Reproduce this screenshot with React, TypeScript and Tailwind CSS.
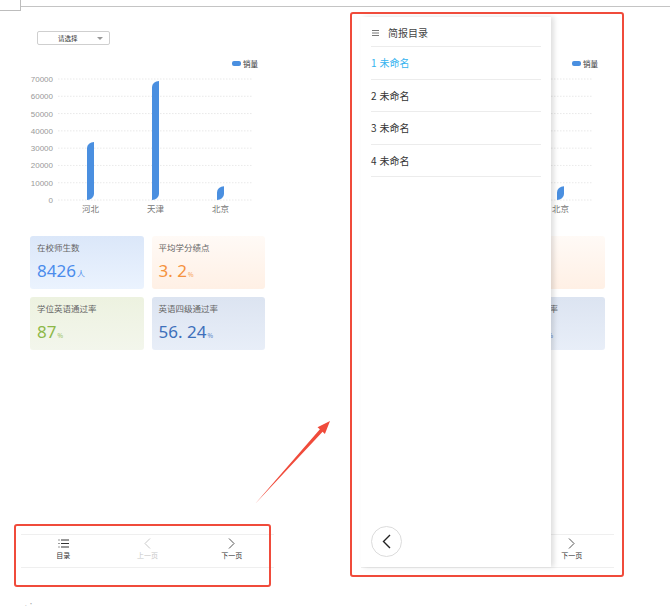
import React from 'react';

const bars = [
  { name: '河北', value: 33500, x: 66 },
  { name: '天津', value: 68800, x: 131 },
  { name: '北京', value: 8000, x: 196 },
];

const cards = [
  { title: '在校师生数', value: '8426', unit: '人', bg: 'bg-linear-to-b from-[#dbe7f9] to-[#ebf3fe]', color: 'text-[#4b8cec]' },
  { title: '平均学分绩点', value: '3. 2', unit: '%', bg: 'bg-linear-to-b from-[#fffaf6] to-[#fff0e5]', color: 'text-[#f5923e]' },
  { title: '学位英语通过率', value: '87', unit: '%', bg: 'bg-linear-to-b from-[#edf2e0] to-[#f3f6ec]', color: 'text-[#8db848]' },
  { title: '英语四级通过率', value: '56. 24', unit: '%', bg: 'bg-linear-to-b from-[#dce4f1] to-[#e8eef8]', color: 'text-[#3e70bb]' },
];

const menuItems = ['未命名', '未命名', '未命名', '未命名'];

const Chart: React.FC = () => {
  const base = 143;
  const top = 22;
  const scale = (base - top) / 70000;
  const ticks = [0, 10000, 20000, 30000, 40000, 50000, 60000, 70000];
  return (
    <svg width="253" height="165" className="mt-[12px] block" fontFamily="'Liberation Sans', 'Noto Sans CJK SC', sans-serif">
      <rect x="211" y="4" width="9" height="5" rx="2" fill="#4a8fe0" />
      <text x="222" y="10" fontSize="7.5" fill="#333" fontFamily="'Noto Sans CJK SC', sans-serif">销量</text>
      {ticks.map((t) => {
        const y = base - t * scale;
        return (
          <g key={t}>
            <line x1="37" x2="232" y1={y} y2={y} stroke="#e3e3e3" strokeWidth="0.8" strokeDasharray="1.5 1.5" />
            <text x="32" y={y + 3} fontSize="8" fill="#999" textAnchor="end">{t}</text>
          </g>
        );
      })}
      {bars.map((b) => {
        const w = 7;
        const yt = base - b.value * scale;
        const ry = Math.min(6, (base - yt) / 2);
        const d = `M ${b.x} ${yt + ry} A ${w} ${ry} 0 0 1 ${b.x + w} ${yt} L ${b.x + w} ${base - ry} A ${w} ${ry} 0 0 1 ${b.x} ${base} Z`;
        return (
          <g key={b.name}>
            <path d={d} fill="#4a8fe0" />
            <text x={b.x + w / 2} y="155" fontSize="8.5" fill="#777" textAnchor="middle" fontFamily="'Noto Sans CJK SC', sans-serif">{b.name}</text>
          </g>
        );
      })}
    </svg>
  );
};

const ListIcon: React.FC = () => (
  <svg width="11" height="9" viewBox="0 0 11 9" fill="none" stroke="#333" strokeWidth="1">
    <path d="M3 1h8M3 4.5h8M3 8h8" />
    <path d="M0.5 1h1M0.5 4.5h1M0.5 8h1" />
  </svg>
);

const Chevron: React.FC<{ dir: 'left' | 'right'; color: string }> = ({ dir, color }) => (
  <svg width="7" height="11" viewBox="0 0 7 11" fill="none" stroke={color} strokeWidth="1">
    {dir === 'left' ? <path d="M6 0.5L1 5.5l5 5" /> : <path d="M1 0.5l5 5-5 5" />}
  </svg>
);

const PhonePage: React.FC<{ children?: React.ReactNode }> = ({ children }) => (
  <div className="relative w-[253px] h-[551px] flex flex-col bg-white">
    <div className="pt-[14px] pl-[16px]">
      <div className="w-[73px] h-[14px] border border-[#cfcfcf] rounded-[2px] flex items-center pl-[20px] pr-[6px]">
        <span className="text-[6.5px] leading-none text-[#333]">请选择</span>
        <span className="ml-auto w-0 h-0 border-l-[3px] border-r-[3px] border-t-[3px] border-l-transparent border-r-transparent border-t-[#999]" />
      </div>
    </div>
    <Chart />
    <div className="mt-[14px] px-[9px] grid grid-cols-2 gap-[8px]">
      {cards.map((c) => (
        <div key={c.title} className={`h-[53px] rounded-[3px] pl-[7px] pt-[6px] ${c.bg}`}>
          <div className="text-[8.5px] leading-[11px] text-[#666]">{c.title}</div>
          <div className={`mt-[9px] flex items-baseline ${c.color}`}>
            <span className="text-[17px] leading-[18px] font-['Noto_Sans','Noto_Sans_CJK_SC',sans-serif]">{c.value}</span>
            <span className={c.unit === '人' ? 'text-[8px] ml-[1px]' : 'text-[6px] ml-[1px]'}>{c.unit}</span>
          </div>
        </div>
      ))}
    </div>
    <div className="flex-1" />
    <div className="h-[34px] border-t border-b border-[#efefef] grid grid-cols-3">
      <div className="flex flex-col items-center pt-[4px]">
        <ListIcon />
        <span className="mt-[3px] text-[7px] leading-[9px] text-[#333]">目录</span>
      </div>
      <div className="flex flex-col items-center pt-[3px]">
        <Chevron dir="left" color="#c8c8c8" />
        <span className="mt-[2px] text-[7px] leading-[9px] text-[#c8c8c8]">上一页</span>
      </div>
      <div className="flex flex-col items-center pt-[3px]">
        <Chevron dir="right" color="#555" />
        <span className="mt-[2px] text-[7px] leading-[9px] text-[#333]">下一页</span>
      </div>
    </div>
    {children}
  </div>
);

const Drawer: React.FC = () => (
  <div className="absolute left-0 top-0 w-[190px] h-[550px] bg-white shadow-[3px_0_5px_rgba(0,0,0,0.13)] flex flex-col px-[10px]">
    <div className="h-[30px] border-b border-[#ececec] flex items-center pt-[2px]">
      <svg width="7" height="6" viewBox="0 0 7 6" className="ml-[1px]" stroke="#555" strokeWidth="0.8">
        <path d="M0 0.5h7M0 3h7M0 5.5h7" />
      </svg>
      <span className="ml-[9px] text-[10px] text-[#444]">简报目录</span>
    </div>
    {menuItems.map((m, i) => (
      <div
        key={i}
        className={`h-[32.5px] border-b border-[#ececec] flex items-center text-[10px] ${i === 0 ? 'text-[#34b3ef]' : 'text-[#333]'}`}
      >
        <span>{i + 1}</span>
        <span className="ml-[3px]">{m}</span>
      </div>
    ))}
    <div className="flex-1" />
    <div className="mb-[10px] w-[31px] h-[31px] rounded-full border border-[#dcdcdc] flex items-center justify-center">
      <svg width="9" height="15" viewBox="0 0 9 15" fill="none" stroke="#222" strokeWidth="1.4">
        <path d="M8 1L1.5 7.5 8 14" />
      </svg>
    </div>
  </div>
);

const App: React.FC = () => {
  return (
    <div className="relative w-[670px] h-[608px] bg-white overflow-hidden font-['Noto_Sans_CJK_SC',sans-serif]">
      <div className="flex pt-[17px]">
        <div className="ml-[21px]">
          <PhonePage />
        </div>
        <div className="ml-[87px]">
          <PhonePage>
            <Drawer />
          </PhonePage>
        </div>
      </div>

      {/* document marks */}
      <div className="absolute left-0 top-0 w-[21px] h-[11px] border-r border-b border-[#bdbdbd]" />
      <div className="absolute left-[21px] right-0 top-[6px] border-t border-[#c4c4c4]" />
      <div className="absolute left-[25px] top-[601px] text-[6px] leading-[6px] text-[#aaa]">. ·</div>

      {/* annotations */}
      <div className="absolute left-[14px] top-[524px] w-[257px] h-[63px] border-2 border-[#f04b3b] rounded-[3px]" />
      <div className="absolute left-[350px] top-[12px] w-[274px] h-[565px] border-2 border-[#f04b3b] rounded-[3px]" />
      <svg className="absolute left-0 top-0" width="670" height="608">
        <polygon points="255,504 322.6,431.7 324.9,434 330,421 317.5,427.2 319.9,429.3" fill="#f04b3b" />
      </svg>
    </div>
  );
};

export default App;
